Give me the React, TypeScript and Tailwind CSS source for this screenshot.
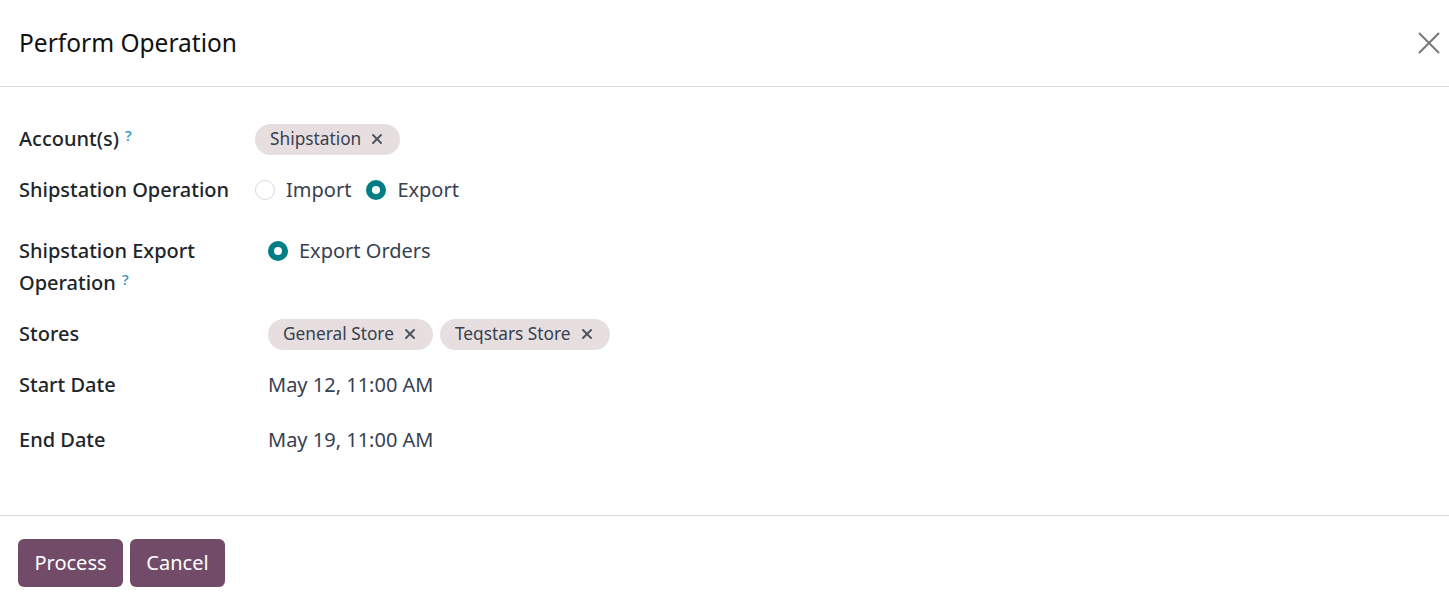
import React from "react";
import { X } from "lucide-react";

const font = { fontFamily: '"Noto Sans", "Open Sans", sans-serif' };

function Tag({ label }: { label: string }) {
  return (
    <span className="inline-flex items-center h-[31px] pl-[15px] pr-[15px] gap-[8px] rounded-full bg-[#e7dfdf] text-[#374151] text-[17.3px]">
      {label}
      <X className="w-[16px] h-[16px] text-[#4b5563]" strokeWidth={3} />
    </span>
  );
}

function Radio({ checked }: { checked?: boolean }) {
  return checked ? (
    <span className="block w-[20px] h-[20px] rounded-full border-[6px] border-[#017e84] bg-white" />
  ) : (
    <span className="block w-[20px] h-[20px] rounded-full border border-[#d9d9d9] bg-white" />
  );
}

function Help() {
  return <sup className="ml-[6px] text-[15px] text-[#2a94c0] font-medium relative -top-[5px]">?</sup>;
}

export default function App() {
  return (
    <div className="w-[1449px] h-[607px] bg-white text-[#212529]" style={font}>
      {/* Header */}
      <div className="h-[87px] border-b border-[#dcdcdc] flex items-center justify-between pl-[19px] pr-[9px]">
        <h1 className="text-[24.5px] text-[#111]">Perform Operation</h1>
        <svg className="w-[22px] h-[22px]" viewBox="0 0 22 22" fill="none" stroke="#777" strokeWidth={2}>
          <path d="M1 1l20 20M21 1L1 21" />
        </svg>
      </div>

      {/* Body */}
      <div className="pl-[19px] pt-[36px] pb-[59px] text-[20px] leading-[32px]">
        <div className="flex items-center h-[32px]">
          <div className="w-[236px] font-medium">
            Account(s)
            <Help />
          </div>
          <Tag label="Shipstation" />
        </div>

        <div className="flex items-center h-[32px] mt-[19px]">
          <div className="w-[236px] font-medium">Shipstation Operation</div>
          <div className="flex items-center text-[#374151]">
            <Radio />
            <span className="ml-[11px]">Import</span>
            <span className="ml-[15px]"><Radio checked /></span>
            <span className="ml-[11px]">Export</span>
          </div>
        </div>

        <div className="flex items-start mt-[29px]">
          <div className="w-[249px] font-medium">
            Shipstation Export
            <br />
            Operation
            <Help />
          </div>
          <div className="flex items-center h-[32px] text-[#374151]">
            <Radio checked />
            <span className="ml-[11px]">Export Orders</span>
          </div>
        </div>

        <div className="flex items-center h-[32px] mt-[19px]">
          <div className="w-[249px] font-medium">Stores</div>
          <div className="flex items-center gap-[7px]">
            <Tag label="General Store" />
            <Tag label="Teqstars Store" />
          </div>
        </div>

        <div className="flex items-center h-[32px] mt-[19px]">
          <div className="w-[249px] font-medium">Start Date</div>
          <div className="text-[#374151]">May 12, 11:00 AM</div>
        </div>

        <div className="flex items-center h-[32px] mt-[23px]">
          <div className="w-[249px] font-medium">End Date</div>
          <div className="text-[#374151]">May 19, 11:00 AM</div>
        </div>
      </div>

      {/* Footer */}
      <div className="border-t border-[#dcdcdc] pt-[23px] pl-[18px] flex gap-[7px]">
        <button className="h-[48px] w-[105px] rounded-[6px] bg-[#714b67] text-white text-[20px]">Process</button>
        <button className="h-[48px] w-[95px] rounded-[6px] bg-[#714b67] text-white text-[20px]">Cancel</button>
      </div>
    </div>
  );
}
